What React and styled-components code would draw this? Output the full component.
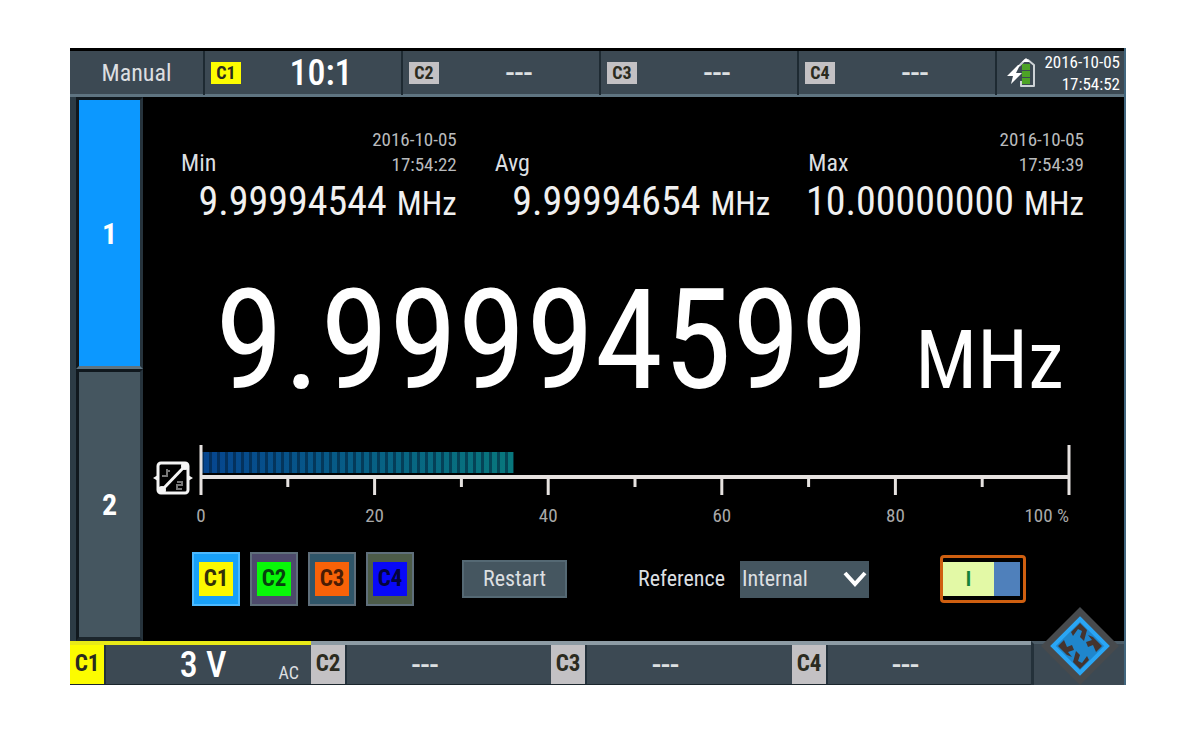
import React, { useState } from 'react';
import styled, { createGlobalStyle } from 'styled-components';

const COLOR = {
  panel: '#3c4953',
  panelLight: '#455660',
  edge: '#2c3b45',
  rim: '#5f7481',
  rimLight: '#8d9ba4',
  active: '#0c98ff',
  yellow: '#fcfc00',
  grey: '#c3c1c4',
  text: '#dcdfe1',
  white: '#ffffff',
  black: '#000000',
};

const GlobalStyle = createGlobalStyle`
  * {
    box-sizing: border-box;
  }

  body {
    margin: 0;
    background: ${COLOR.white};
    font-family: 'Roboto Condensed', 'Open Sans Condensed', Roboto, sans-serif;
    color: ${COLOR.text};
  }

  button,
  select {
    font: inherit;
    color: inherit;
    border: 0;
    border-radius: 0;
    padding: 0;
    cursor: pointer;
  }
`;

const Page = styled.div`
  padding: 48px 74px 48px 70px;
`;

const Device = styled.div`
  background: ${COLOR.black};
  border-right: 2px solid #42677f;
`;

const TopBar = styled.header`
  display: grid;
  grid-template-columns: 133fr repeat(4, 198fr) 129fr;
  height: 49px;
  background: ${COLOR.panel};
  border-top: 3px solid ${COLOR.black};
  border-bottom: 3px solid ${COLOR.rim};
`;

const TopCell = styled.div`
  display: flex;
  align-items: center;
  padding-left: 6px;
  border-left: 2px solid #1e2a32;
`;

const Mode = styled.button`
  background: transparent;
  font-size: 24px;
  line-height: 28px;
`;

const Tag = styled.span`
  width: 30px;
  height: 22px;
  background: ${({ $on }) => ($on ? COLOR.yellow : COLOR.grey)};
  color: #2b2b20;
  font-size: 18px;
  font-weight: bold;
  line-height: 22px;
  text-align: center;
`;

const Probe = styled.span`
  flex: 1;
  color: ${COLOR.white};
  font-size: 36px;
  font-weight: 500;
  line-height: 40px;
  text-align: center;
`;

const Dashes = styled.span`
  flex: 1;
  padding-right: ${({ $inset }) => $inset}px;
  font-size: 36px;
  line-height: 36px;
  text-align: center;
`;

const Status = styled(TopCell)`
  justify-content: space-between;
  padding: 0 4px 0 10px;
`;

const Clock = styled.div`
  color: ${COLOR.white};
  font-size: 17px;
  line-height: 22px;
  text-align: right;
`;

const Main = styled.main`
  display: flex;
  height: 544px;
`;

const SideBar = styled.nav`
  display: grid;
  grid-template-rows: 272px 1fr;
  width: 73px;
  border-left: 6px solid ${COLOR.edge};
`;

const SideTab = styled.button`
  background: ${({ $active }) => ($active ? COLOR.active : COLOR.panelLight)};
  border: 3px solid #10181e;
  border-bottom: ${({ $active }) => ($active ? `3px solid ${COLOR.rim}` : '4px solid #1b252c')};
  border-right-color: #26333c;
  color: ${COLOR.white};
  font-size: 30px;
  font-weight: bold;
`;

const Content = styled.section`
  flex: 1;
  min-width: 0;
  padding: 30px 40px 0 38px;
`;

const Stats = styled.div`
  display: grid;
  grid-template-columns: repeat(3, minmax(0, 1fr));
  gap: 38px;
`;

const StatHead = styled.div`
  display: flex;
  justify-content: space-between;
  align-items: flex-end;
  height: 50px;
  font-size: 24px;
  line-height: 28px;
`;

const Stamp = styled.div`
  color: #b9bbbd;
  font-size: 19px;
  line-height: 25px;
  text-align: right;
`;

const StatValue = styled.div`
  display: flex;
  justify-content: flex-end;
  align-items: baseline;
  gap: 10px;
  color: #f0f0f0;
  font-size: 40px;
  line-height: 50px;
`;

const StatUnit = styled.span`
  font-size: 33px;
`;

const Reading = styled.div`
  display: flex;
  justify-content: space-between;
  align-items: baseline;
  padding: 30px 20px 0 34px;
  color: ${COLOR.white};
  font-size: 139px;
  line-height: 164px;
`;

const ReadingUnit = styled.span`
  font-size: 82px;
`;

const Gauge = styled.div`
  display: flex;
  gap: 8px;
  margin: 3px 15px 0 -28px;
`;

const GaugeIcon = styled.svg`
  flex: none;
  width: 40px;
  height: 36px;
  margin-top: 15px;
`;

const Scale = styled.div`
  flex: 1;
`;

const Axis = styled.svg`
  display: block;
  width: 100%;
  height: 51px;
  overflow: visible;
`;

const ScaleLabels = styled.div`
  display: grid;
  grid-template-columns: repeat(5, 2fr) 1fr;
  margin: 8px 0 0 -10%;
  color: #a9a9a9;
  font-size: 19px;
  line-height: 24px;
  text-align: center;
`;

const ScaleEnd = styled.span`
  text-align: right;
`;

const Controls = styled.div`
  display: flex;
  align-items: center;
  margin: 24px 58px 0 11px;
`;

const Channels = styled.div`
  display: flex;
  gap: 10px;
`;

const ChannelButton = styled.button`
  display: grid;
  place-items: center;
  width: 48px;
  height: 54px;
  background: ${({ $on, $tone }) => ($on ? '#18a0f8' : $tone)};
  border: 2px solid ${({ $on }) => ($on ? '#4bb9ff' : '#5f6f7b')};
`;

const Swatch = styled.span`
  width: 34px;
  height: 34px;
  background: ${({ $color }) => $color};
  color: ${({ $ink }) => $ink};
  font-size: 23px;
  font-weight: bold;
  line-height: 34px;
`;

const Restart = styled.button`
  width: 105px;
  height: 38px;
  margin-left: 48px;
  background: ${COLOR.panelLight};
  border: 2px solid #556974;
  font-size: 22px;
  line-height: 28px;
`;

const Reference = styled.div`
  display: flex;
  align-items: center;
  gap: 15px;
  margin: 0 auto;
  font-size: 22px;
  line-height: 28px;
`;

const SelectBox = styled.div`
  position: relative;
  width: 129px;
`;

const Select = styled.select`
  appearance: none;
  width: 100%;
  height: 37px;
  padding-left: 2px;
  background: ${COLOR.panelLight};
`;

const Chevron = styled.svg`
  position: absolute;
  top: 9px;
  right: 2px;
  width: 24px;
  height: 19px;
  pointer-events: none;
`;

const Toggle = styled.label`
  display: grid;
  width: 86px;
  height: 48px;
  border: 3px solid #cf5f10;
  border-radius: 4px;
  padding: 4px 3px 4px 0;
  cursor: pointer;
`;

const ToggleInput = styled.input`
  grid-area: 1 / 1;
  appearance: none;
  margin: 0;
  background: linear-gradient(to right, #e3f9a6 66%, #4f80bb 66%);

  &:not(:checked) {
    background: linear-gradient(to right, #4f80bb 34%, #77808a 34%);
  }
`;

const ToggleMark = styled.span`
  grid-area: 1 / 1;
  width: 66%;
  color: #15823a;
  font-size: 20px;
  font-weight: bold;
  line-height: 34px;
  text-align: center;
  pointer-events: none;
`;

const BottomBar = styled.footer`
  display: grid;
  grid-template-columns: 241fr 240fr 241fr 239fr 93fr;
  height: 44px;
`;

const Channel = styled.button`
  display: flex;
  background: ${COLOR.panel};
  border-top: 4px solid ${({ $on }) => ($on ? '#e8ea18' : COLOR.rimLight)};
  border-bottom: 1px solid #1b262d;
`;

const ChannelTag = styled.span`
  align-self: stretch;
  width: 34px;
  background: ${({ $on }) => ($on ? COLOR.yellow : COLOR.grey)};
  color: #2b2b20;
  font-size: 23px;
  font-weight: bold;
  line-height: 37px;
`;

const ChannelBody = styled.span`
  display: flex;
  flex: 1;
  align-self: stretch;
  align-items: center;
  border-left: 2px solid #22303a;
`;

const ChannelScale = styled.span`
  flex: 1;
  padding-left: 22px;
  color: ${COLOR.white};
  font-size: 36px;
  font-weight: 500;
  line-height: 38px;
`;

const Coupling = styled.span`
  align-self: flex-end;
  padding-right: 12px;
  font-size: 18px;
  line-height: 22px;
`;

const Menu = styled.button`
  position: relative;
  background: ${COLOR.panel};
  border-top: 3px solid #4d5d68;
  border-left: 3px solid #24313a;
`;

const Logo = styled.svg`
  position: absolute;
  bottom: 0;
  left: 7px;
  width: 78px;
  height: 78px;
`;

const stats = [
  { label: 'Min', date: '2016-10-05', time: '17:54:22', value: '9.99994544' },
  { label: 'Avg', value: '9.99994654' },
  { label: 'Max', date: '2016-10-05', time: '17:54:39', value: '10.00000000' },
];

const sources = [
  { name: 'C1', color: '#fcf800', ink: '#33300a', tone: '#4f5238' },
  { name: 'C2', color: '#08f808', ink: '#07420e', tone: '#4d4a6b' },
  { name: 'C3', color: '#f86208', ink: '#4a1c04', tone: '#2f5568' },
  { name: 'C4', color: '#0808f8', ink: '#04043c', tone: '#4c5b48' },
];

const GateIcon = () => (
  <GaugeIcon viewBox="0 0 40 36" fill="none" stroke="#f4f4f4">
    <rect x="5" y="3" width="30" height="30" rx="3" strokeWidth="3" />
    <path d="M8 31L33 5" strokeWidth="3" />
    <path d="M0 18l5-3v6zM40 18l-5-3v6z" fill="#f4f4f4" stroke="none" />
    <circle cx="9" cy="30" r="4" fill="#f4f4f4" stroke="none" />
    <circle cx="32" cy="6" r="4" fill="#f4f4f4" stroke="none" />
    <path d="M14 9v7h-5M13 11h4M24 22h5v3h-5v4h5" stroke="#777" strokeWidth="2" />
  </GaugeIcon>
);

const BatteryIcon = () => (
  <svg width="30" height="34" viewBox="0 0 30 34">
    <path
      d="M12 10L18 4h3l6 5v21H14v-5"
      fill="none"
      stroke="#cdd2d6"
      strokeWidth="2"
      strokeLinejoin="round"
    />
    <path d="M15 6l4-4 4 4z" fill="#ffffff" />
    <path d="M15 8h8v6h-8zM15 15h8v6h-8zM15 22h8v6h-8z" fill="#4da326" />
    <path d="M11 9L0 20h6l-2 8 11-11H9l4-8z" fill="#ffffff" />
  </svg>
);

const BrandLogo = () => (
  <Logo viewBox="0 0 78 78">
    <path d="M39 0L78 39L39 78L0 39Z" fill="#474a4d" />
    <path d="M39 12L66 39L39 66L12 39Z" fill="#1f86cc" stroke="#2aa6f5" strokeWidth="4" />
    <path
      d="M30 25L39 16L46 23L43 34L39 30L41 24L37 22L32 29Z
         M47 28L52 30L61 39L55 45L52 38L47 40L45 35L51 33Z
         M48 53L39 62L32 55L35 44L39 48L37 54L41 56L46 49Z
         M31 50L26 48L17 39L23 33L26 40L31 38L33 43L27 45Z"
      fill="#45342e"
    />
  </Logo>
);

const GateScale = ({ progress }) => (
  <Axis role="img" aria-label={`Gate ${progress} %`}>
    <defs>
      <linearGradient id="progress">
        <stop offset="0" stopColor="#06458f" />
        <stop offset="1" stopColor="#08777c" />
      </linearGradient>
      <pattern id="stripes" width="8" height="20" patternUnits="userSpaceOnUse">
        <rect width="3" height="20" fill="#021d35" fillOpacity="0.55" />
      </pattern>
    </defs>
    <rect y="7" width={`${progress}%`} height="21" fill="url(#progress)" />
    <rect y="7" width={`${progress}%`} height="21" fill="url(#stripes)" />
    <g stroke="#e6e2e0">
      <line x1="0" x2="100%" y1="32" y2="32" strokeWidth="4" />
      {[0, 20, 40, 60, 80, 100].map((x) => (
        <line key={x} x1={`${x}%`} x2={`${x}%`} y1={x % 100 ? 32 : 0} y2="50" strokeWidth="3" />
      ))}
      {[10, 30, 50, 70, 90].map((x) => (
        <line key={x} x1={`${x}%`} x2={`${x}%`} y1="32" y2="42" strokeWidth="3" />
      ))}
    </g>
  </Axis>
);

const App = () => {
  const [tab, setTab] = useState(1);
  const [source, setSource] = useState('C1');

  return (
    <Page>
      <GlobalStyle />
      <Device>
        <TopBar>
          <Mode>Manual</Mode>
          <TopCell>
            <Tag $on>C1</Tag>
            <Probe>10:1</Probe>
          </TopCell>
          {['C2', 'C3', 'C4'].map((name) => (
            <TopCell key={name}>
              <Tag>{name}</Tag>
              <Dashes $inset={0}>---</Dashes>
            </TopCell>
          ))}
          <Status>
            <BatteryIcon />
            <Clock>
              2016-10-05
              <br />
              17:54:52
            </Clock>
          </Status>
        </TopBar>

        <Main>
          <SideBar>
            {[1, 2].map((n) => (
              <SideTab key={n} $active={tab === n} onClick={() => setTab(n)}>
                {n}
              </SideTab>
            ))}
          </SideBar>

          <Content>
            <Stats>
              {stats.map((stat) => (
                <div key={stat.label}>
                  <StatHead>
                    <span>{stat.label}</span>
                    {stat.date && (
                      <Stamp>
                        {stat.date}
                        <br />
                        {stat.time}
                      </Stamp>
                    )}
                  </StatHead>
                  <StatValue>
                    {stat.value}
                    <StatUnit>MHz</StatUnit>
                  </StatValue>
                </div>
              ))}
            </Stats>

            <Reading>
              9.99994599
              <ReadingUnit>MHz</ReadingUnit>
            </Reading>

            <Gauge>
              <GateIcon />
              <Scale>
                <GateScale progress={36} />
                <ScaleLabels>
                  {[0, 20, 40, 60, 80].map((x) => (
                    <span key={x}>{x}</span>
                  ))}
                  <ScaleEnd>100 %</ScaleEnd>
                </ScaleLabels>
              </Scale>
            </Gauge>

            <Controls>
              <Channels>
                {sources.map(({ name, color, ink, tone }) => (
                  <ChannelButton
                    key={name}
                    $on={source === name}
                    $tone={tone}
                    onClick={() => setSource(name)}
                  >
                    <Swatch $color={color} $ink={ink}>
                      {name}
                    </Swatch>
                  </ChannelButton>
                ))}
              </Channels>
              <Restart>Restart</Restart>
              <Reference>
                <label htmlFor="reference">Reference</label>
                <SelectBox>
                  <Select id="reference">
                    <option>Internal</option>
                    <option>External</option>
                  </Select>
                  <Chevron viewBox="0 0 24 19">
                    <path d="M2 3L12 14L22 3" fill="none" stroke="#fff" strokeWidth="4" />
                  </Chevron>
                </SelectBox>
              </Reference>
              <Toggle>
                <ToggleInput type="checkbox" role="switch" aria-label="Counter" defaultChecked />
                <ToggleMark>I</ToggleMark>
              </Toggle>
            </Controls>
          </Content>
        </Main>

        <BottomBar>
          <Channel $on>
            <ChannelTag $on>C1</ChannelTag>
            <ChannelBody>
              <ChannelScale>3 V</ChannelScale>
              <Coupling>AC</Coupling>
            </ChannelBody>
          </Channel>
          {['C2', 'C3', 'C4'].map((name) => (
            <Channel key={name}>
              <ChannelTag>{name}</ChannelTag>
              <ChannelBody>
                <Dashes $inset={48}>---</Dashes>
              </ChannelBody>
            </Channel>
          ))}
          <Menu aria-label="Menu">
            <BrandLogo />
          </Menu>
        </BottomBar>
      </Device>
    </Page>
  );
};

export default App;
